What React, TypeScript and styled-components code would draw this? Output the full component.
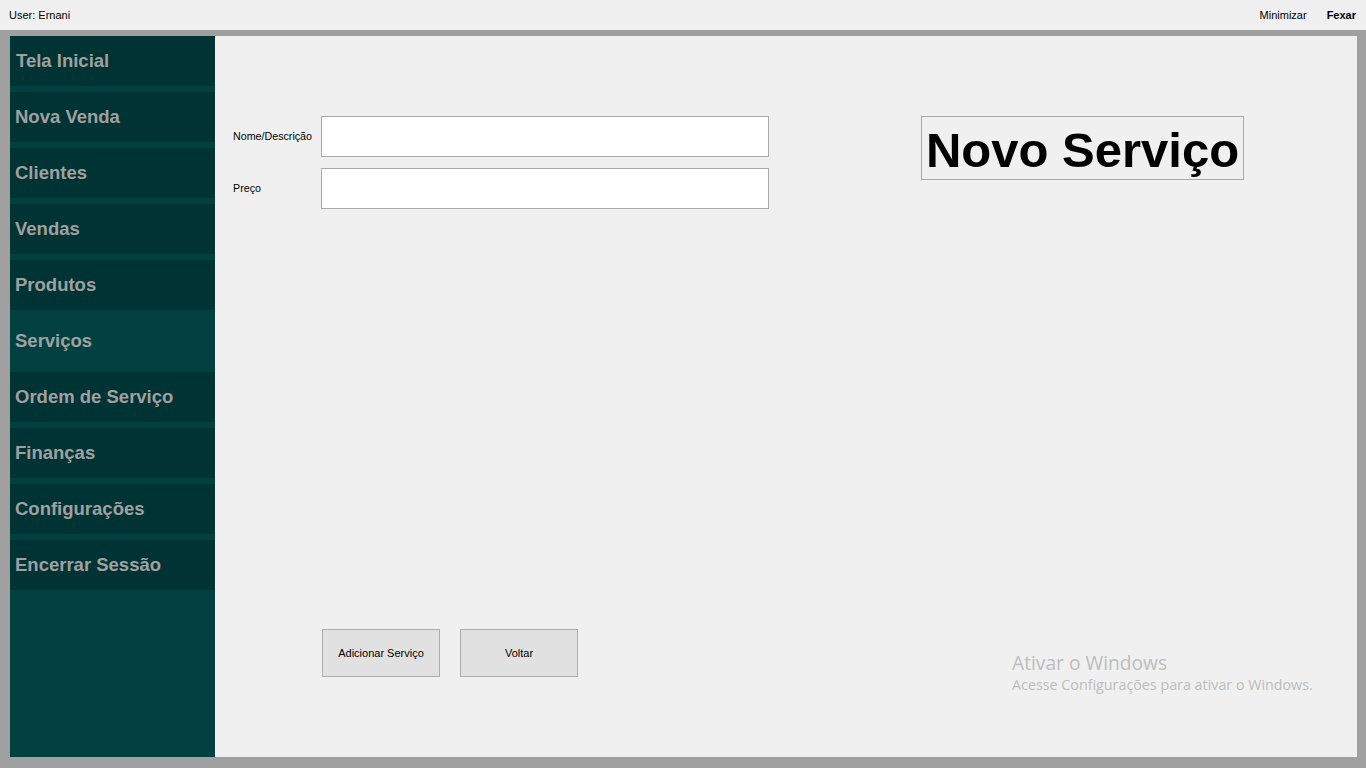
import React from "react";
import styled, { createGlobalStyle } from "styled-components";

const Global = createGlobalStyle`
  html, body { margin: 0; padding: 0; }
  body {
    width: 1366px; height: 768px; overflow: hidden;
    background: #f0f0f0;
    font-family: "Liberation Sans", Arial, sans-serif;
  }
  * { box-sizing: border-box; }
`;

const Screen = styled.div`
  width: 1366px;
  height: 768px;
  display: flex;
  flex-direction: column;
  position: relative;
`;

const TopBar = styled.div`
  height: 30px;
  background: #f0f0f0;
  display: flex;
  align-items: center;
  padding: 0 10px 0 9px;
  font-size: 11px;
  color: #000;
`;

const UserLabel = styled.span`
  flex: 1;
`;

const TopAction = styled.span<{ $bold?: boolean }>`
  font-weight: ${(p) => (p.$bold ? 700 : 400)};
  margin-left: ${(p) => (p.$bold ? "20px" : "0")};
`;

const Frame = styled.div`
  flex: 1;
  background: #a0a0a0;
  padding: 6px 9px 11px 10px;
  display: flex;
`;

const Sidebar = styled.nav`
  width: 205px;
  background: #004040;
  display: flex;
  flex-direction: column;
  gap: 6px;
`;

const NavItem = styled.div<{ $active?: boolean; $first?: boolean }>`
  height: 50px;
  background: ${(p) => (p.$active ? "#004040" : "#003333")};
  color: #a0a0a0;
  font-weight: 700;
  font-size: 18.5px;
  display: flex;
  align-items: center;
  padding-left: ${(p) => (p.$first ? "6px" : "5px")};
`;

const Main = styled.main`
  flex: 1;
  background: #f0f0f0;
  display: flex;
  flex-direction: column;
  padding: 80px 0 80px 18px;
`;

const TopArea = styled.div`
  display: flex;
  align-items: flex-start;
`;

const Form = styled.div`
  display: flex;
  flex-direction: column;
  gap: 11px;
`;

const FieldRow = styled.div`
  display: flex;
  align-items: center;
`;

const Label = styled.label`
  width: 88px;
  font-size: 10.7px;
  color: #000;
  position: relative;
  top: -1px;
`;

const Input = styled.input`
  width: 448px;
  height: 41px;
  border: 1px solid #a9a9a9;
  background: #fff;
  outline: none;
`;

const TitleBox = styled.div`
  margin-left: 152px;
  width: 323px;
  height: 64px;
  border: 1px solid #a9a9a9;
  display: flex;
  align-items: center;
  justify-content: center;
  font-size: 49px;
  font-weight: 700;
  color: #000;
  padding-top: 3px;
  white-space: nowrap;
`;

const Spacer = styled.div`
  flex: 1;
`;

const Buttons = styled.div`
  display: flex;
  gap: 20px;
  margin-left: 89px;
`;

const Button = styled.button`
  width: 118px;
  height: 48px;
  background: #e1e1e1;
  border: 1px solid #adadad;
  font-family: "Liberation Sans", Arial, sans-serif;
  font-size: 11px;
  color: #000;
  padding: 0;
`;

const Watermark = styled.div`
  position: absolute;
  left: 1012px;
  top: 651px;
  font-family: "Open Sans", "Noto Sans", sans-serif;
  color: #bdbdbd;
  line-height: 1.2;
`;

const WmTitle = styled.div`
  font-size: 19.2px;
`;

const WmSub = styled.div`
  font-size: 14.3px;
  margin-top: 2px;
`;

const items = [
  "Tela Inicial",
  "Nova Venda",
  "Clientes",
  "Vendas",
  "Produtos",
  "Serviços",
  "Ordem de Serviço",
  "Finanças",
  "Configurações",
  "Encerrar Sessão",
];

export default function App() {
  return (
    <Screen>
      <Global />
      <TopBar>
        <UserLabel>User: Ernani</UserLabel>
        <TopAction>Minimizar</TopAction>
        <TopAction $bold>Fexar</TopAction>
      </TopBar>
      <Frame>
        <Sidebar>
          {items.map((it, i) => (
            <NavItem key={it} $active={it === "Serviços"} $first={i === 0}>
              {it}
            </NavItem>
          ))}
        </Sidebar>
        <Main>
          <TopArea>
            <Form>
              <FieldRow>
                <Label>Nome/Descrição</Label>
                <Input />
              </FieldRow>
              <FieldRow>
                <Label>Preço</Label>
                <Input />
              </FieldRow>
            </Form>
            <TitleBox>Novo Serviço</TitleBox>
          </TopArea>
          <Spacer />
          <Buttons>
            <Button>Adicionar Serviço</Button>
            <Button>Voltar</Button>
          </Buttons>
        </Main>
      </Frame>
      <Watermark>
        <WmTitle>Ativar o Windows</WmTitle>
        <WmSub>Acesse Configurações para ativar o Windows.</WmSub>
      </Watermark>
    </Screen>
  );
}
